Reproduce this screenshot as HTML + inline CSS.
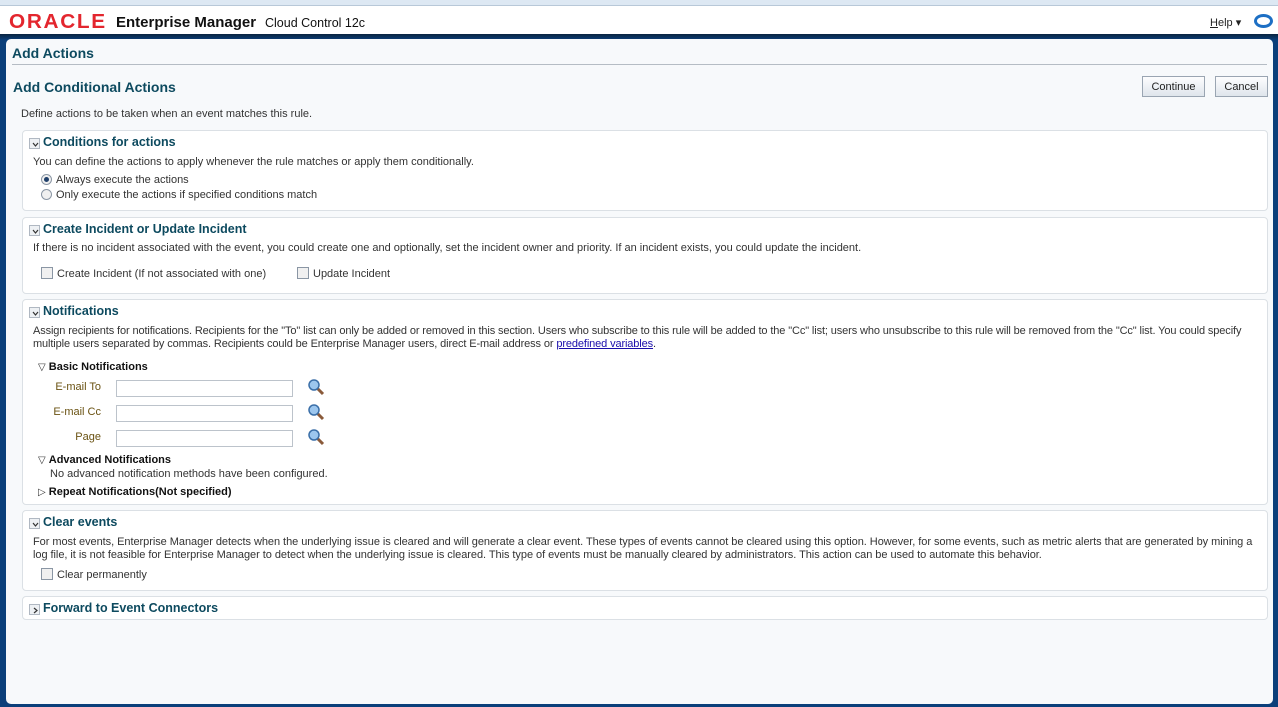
<!DOCTYPE html>
<html><head><style>
*{margin:0;padding:0;box-sizing:border-box}
body{width:1278px;height:707px;overflow:hidden;font-family:"Liberation Sans",sans-serif;font-size:11px;color:#333;background:#0b3f7a;position:relative}
.top{position:absolute;left:0;top:0;width:1278px;height:5px;background:#dde8f3}
.hdr{position:absolute;left:0;top:5px;width:1278px;height:29px;background:#fff;border-top:1px solid #b8c8d8}
.oracle{position:absolute;left:9px;top:5px;font-size:20px;color:#e3262e;letter-spacing:1.6px;font-weight:bold;transform:scaleX(1.04);transform-origin:left}
.em{position:absolute;left:116px;top:8px;font-size:15px;font-weight:bold;color:#111}
.cc{position:absolute;left:265px;top:10px;font-size:12.5px;color:#111}
.help{position:absolute;left:1210px;top:10px;font-size:11px;color:#222}
.ring{position:absolute;left:1254px;top:8px;width:19px;height:14px;border:3px solid #1d6fc4;border-radius:50%}
.band{position:absolute;left:0;top:34px;width:1278px;height:6px;background:linear-gradient(#0a2440,#0b3f7a)}
.panel{position:absolute;left:6px;top:39px;width:1267px;height:665px;background:#f7f9fb;border-radius:5px}
.h1{position:absolute;left:6px;top:6px;font-size:14px;font-weight:bold;color:#0d4a5f}
.rule{position:absolute;left:6px;top:25px;width:1255px;height:1px;background:#b5bcc4}
.h2{position:absolute;left:7px;top:40px;font-size:14px;font-weight:bold;color:#0d4a5f}
.desc{position:absolute;left:15px;top:69px;color:#333}
.btn{position:absolute;top:37px;height:21px;border:1px solid #9aa5b2;background:linear-gradient(#fdfdfe,#dfe5ec);font-size:11px;color:#222;text-align:center;line-height:20px}
.sec{position:absolute;left:16px;width:1246px;background:#fff;border:1px solid #dbe0e5;border-radius:4px}
.sec h3{position:absolute;left:20px;top:4px;font-size:12.5px;font-weight:bold;color:#0d4a5f}
.tog{position:absolute;left:6px;top:7px;width:11px;height:11px;border:1px solid #b0b8c2;background:#eef1f4}
.tog svg{position:absolute;left:1px;top:1px}
.t{position:absolute;white-space:nowrap}
.rad{display:inline-block;width:11px;height:11px;border:1px solid #8a96a4;border-radius:50%;background:#f0f0f0;vertical-align:-2px;margin-right:4px;position:relative}
.rad.on::after{content:"";position:absolute;left:2px;top:2px;width:5px;height:5px;border-radius:50%;background:#1f3f6a}
.cb{display:inline-block;width:12px;height:12px;border:1px solid #8a96a4;background:#f0f0f0;vertical-align:-2px;margin-right:4px}
.lbl{position:absolute;color:#6a5212;text-align:right;width:60px}
.inp{position:absolute;width:177px;height:17px;border:1px solid #bcc3cb;background:#fff}
.mag{position:absolute;width:18px;height:18px}
b{color:#111}
a{color:#1a0dab}
</style></head><body>
<div class="top"></div>
<div class="hdr">
<div class="oracle">ORACLE</div>
<div class="em">Enterprise Manager</div>
<div class="cc">Cloud Control 12c</div>
<div class="help"><u>H</u>elp ▾</div>
<div class="ring"></div>
</div>
<div class="band"></div>
<div class="panel">
<div class="h1">Add Actions</div>
<div class="rule"></div>
<div class="h2">Add Conditional Actions</div>
<div class="btn" style="left:1136px;width:63px">Continue</div>
<div class="btn" style="left:1209px;width:53px">Cancel</div>
<div class="desc">Define actions to be taken when an event matches this rule.</div>

<div class="sec" style="top:91px;height:81px">
<div class="tog"><svg width="9" height="9"><path d="M2 3 L4.5 6 L7 3" fill="none" stroke="#333" stroke-width="1.2"/></svg></div><h3>Conditions for actions</h3>
<div class="t" style="left:10px;top:25px">You can define the actions to apply whenever the rule matches or apply them conditionally.</div>
<div class="t" style="left:18px;top:43px"><span class="rad on"></span>Always execute the actions</div>
<div class="t" style="left:18px;top:58px"><span class="rad"></span>Only execute the actions if specified conditions match</div>
</div>

<div class="sec" style="top:178px;height:77px">
<div class="tog"><svg width="9" height="9"><path d="M2 3 L4.5 6 L7 3" fill="none" stroke="#333" stroke-width="1.2"/></svg></div><h3>Create Incident or Update Incident</h3>
<div class="t" style="left:10px;top:24px">If there is no incident associated with the event, you could create one and optionally, set the incident owner and priority. If an incident exists, you could update the incident.</div>
<div class="t" style="left:18px;top:49px"><span class="cb"></span>Create Incident (If not associated with one)</div>
<div class="t" style="left:274px;top:49px"><span class="cb"></span>Update Incident</div>
</div>

<div class="sec" style="top:260px;height:206px">
<div class="tog"><svg width="9" height="9"><path d="M2 3 L4.5 6 L7 3" fill="none" stroke="#333" stroke-width="1.2"/></svg></div><h3>Notifications</h3>
<div class="t" style="left:10px;top:25px;white-space:normal;width:1236px;line-height:13px;letter-spacing:-0.12px">Assign recipients for notifications. Recipients for the "To" list can only be added or removed in this section. Users who subscribe to this rule will be added to the "Cc" list; users who unsubscribe to this rule will be removed from the "Cc" list. You could specify multiple users separated by commas. Recipients could be Enterprise Manager users, direct E-mail address or <a href="#">predefined variables</a>.</div>
<div class="t" style="left:15px;top:61px"><span style="font-size:10px">▽</span> <b>Basic Notifications</b></div>
<div class="lbl" style="left:18px;top:81px">E-mail To</div><div class="inp" style="left:93px;top:80px"></div>
<div class="lbl" style="left:18px;top:106px">E-mail Cc</div><div class="inp" style="left:93px;top:105px"></div>
<div class="lbl" style="left:18px;top:131px">Page</div><div class="inp" style="left:93px;top:130px"></div>
<svg class="mag" style="left:284px;top:78px" viewBox="0 0 18 18"><line x1="10" y1="10" x2="16" y2="16" stroke="#8a5a3a" stroke-width="3"/><circle cx="7" cy="7" r="5" fill="#9cc6ee" stroke="#3b6fa8" stroke-width="1.5"/></svg>
<svg class="mag" style="left:284px;top:103px" viewBox="0 0 18 18"><line x1="10" y1="10" x2="16" y2="16" stroke="#8a5a3a" stroke-width="3"/><circle cx="7" cy="7" r="5" fill="#9cc6ee" stroke="#3b6fa8" stroke-width="1.5"/></svg>
<svg class="mag" style="left:284px;top:128px" viewBox="0 0 18 18"><line x1="10" y1="10" x2="16" y2="16" stroke="#8a5a3a" stroke-width="3"/><circle cx="7" cy="7" r="5" fill="#9cc6ee" stroke="#3b6fa8" stroke-width="1.5"/></svg>
<div class="t" style="left:15px;top:154px"><span style="font-size:10px">▽</span> <b>Advanced Notifications</b></div>
<div class="t" style="left:27px;top:168px">No advanced notification methods have been configured.</div>
<div class="t" style="left:15px;top:186px"><span style="font-size:10px">▷</span> <b>Repeat Notifications(Not specified)</b></div>
</div>

<div class="sec" style="top:471px;height:81px">
<div class="tog"><svg width="9" height="9"><path d="M2 3 L4.5 6 L7 3" fill="none" stroke="#333" stroke-width="1.2"/></svg></div><h3>Clear events</h3>
<div class="t" style="left:10px;top:25px;white-space:normal;width:1236px;line-height:13px;letter-spacing:-0.05px">For most events, Enterprise Manager detects when the underlying issue is cleared and will generate a clear event. These types of events cannot be cleared using this option. However, for some events, such as metric alerts that are generated by mining a log file, it is not feasible for Enterprise Manager to detect when the underlying issue is cleared. This type of events must be manually cleared by administrators. This action can be used to automate this behavior.</div>
<div class="t" style="left:18px;top:57px"><span class="cb"></span>Clear permanently</div>
</div>

<div class="sec" style="top:557px;height:24px">
<div class="tog"><svg width="9" height="9"><path d="M3 2 L6 4.5 L3 7" fill="none" stroke="#333" stroke-width="1.2"/></svg></div><h3>Forward to Event Connectors</h3>
</div>
</div>
</body></html>
